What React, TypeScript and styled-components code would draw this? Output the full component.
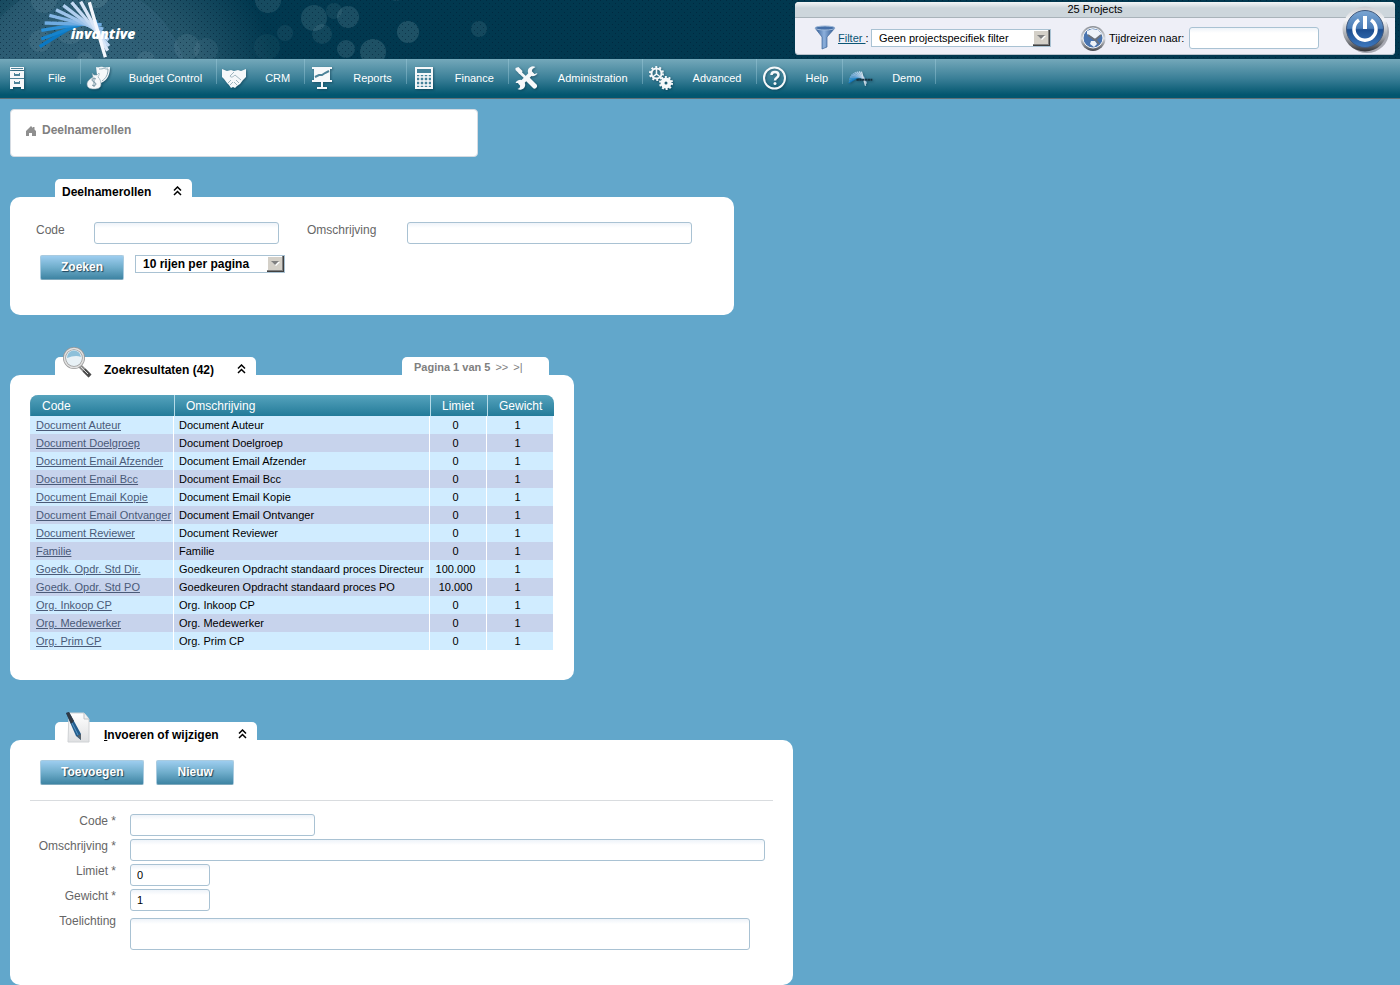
import React from "react";
import styled, { createGlobalStyle, css } from "styled-components";

const GlobalStyle = createGlobalStyle`
  *, *::before, *::after { box-sizing: border-box; }
  body {
    margin: 0;
    background: #62a7cb;
    color: #000;
    font: 11px/16px "Liberation Sans", Arial, sans-serif;
  }
  button, input, select, textarea { font: inherit; color: inherit; margin: 0; }
`;

/* ---------- header ---------- */

const Header = styled.header`
  position: relative;
  display: flex;
  justify-content: space-between;
  align-items: flex-start;
  height: 59px;
  padding: 2px 5px 0 36px;
  overflow: hidden;
  background: #01384f;
`;

const Backdrop = styled.svg`
  position: absolute;
  inset: 0;
  width: 100%;
  height: 100%;
`;

const LogoLink = styled.a`
  position: relative;
  display: block;
  height: 57px;
  svg { display: block; }
`;

const Toolbar = styled.section`
  position: relative;
  width: 600px;
  height: 53px;
  border-radius: 4px;
  overflow: hidden;
  background: #eeeff7;
  box-shadow: inset 0 -1px 0 #b9c2cc;
`;

const ToolbarTitle = styled.div`
  height: 16px;
  line-height: 14px;
  text-align: center;
  border-bottom: 1px solid #a9b3ba;
  background: linear-gradient(#f4f6f7, #cdd6dc 40%, #cdd6dc);
`;

const ToolbarBody = styled.div`
  display: flex;
  align-items: center;
  height: 37px;
  padding: 3px 10px 0 19px;
`;

const FilterText = styled.span`
  width: 35px;
  padding-left: 2px;
  white-space: pre;
  a { color: #0b5575; }
`;

const TravelLabel = styled.label`
  display: flex;
  align-items: center;
  gap: 3px;
  width: 109px;
  margin-left: 29px;
  white-space: nowrap;
`;

const PowerButton = styled.button`
  position: absolute;
  top: 4px;
  right: 5px;
  padding: 0;
  border: 0;
  background: none;
  svg { display: block; }
`;

const Nav = styled.nav`
  display: flex;
  height: 40px;
  border-bottom: 1px solid #5f7077;
  background: linear-gradient(#74a8ba, #3a7f97 50%, #02566f 92%);
`;

const NavItem = styled.a`
  display: flex;
  align-items: center;
  gap: 19px;
  height: 39px;
  padding: 0 15px 2px 5px;
  color: #fff;
  text-decoration: none;
  background: linear-gradient(rgba(160, 205, 220, 0.45), rgba(160, 205, 220, 0.4)) right top / 1px 25px no-repeat;
  svg { filter: drop-shadow(1px 1px 1px rgba(0, 40, 60, 0.45)); }
`;

/* ---------- content ---------- */

const Main = styled.main`
  display: flex;
  flex-direction: column;
  align-items: flex-start;
  padding: 10px 10px 0;
`;

const Breadcrumb = styled.nav`
  display: flex;
  align-items: flex-start;
  gap: 5px;
  width: 468px;
  height: 48px;
  max-width: 100%;
  padding: 12px 14px;
  border: 1px solid #d5dbe2;
  border-radius: 4px;
  background: #fff;
  color: #808080;
  font-size: 12px;
  font-weight: bold;
  svg { margin-top: 3px; }
`;

const Panel = styled.section<{ $first?: boolean }>`
  max-width: 100%;
  margin-top: ${(p) => (p.$first ? 22 : 42)}px;
`;

const TabRow = styled.div`
  display: flex;
  justify-content: space-between;
  height: 18px;
  padding: 0 25px 0 45px;
`;

const Tab = styled.div<{ $width: number }>`
  position: relative;
  display: flex;
  align-items: center;
  justify-content: space-between;
  width: ${(p) => p.$width}px;
  height: 26px;
  padding: 0 10px 0 7px;
  border-radius: 5px 5px 0 0;
  background: linear-gradient(#fff, #fff) top / 100% 18px no-repeat;
`;

const TabTitle = styled.h2`
  display: flex;
  gap: 12px;
  align-items: center;
  margin: 0;
  font-size: 12px;
  line-height: 16px;
  white-space: nowrap;
`;

const TabIcon = styled.span`
  display: block;
  width: 30px;
  height: 16px;
  svg { display: block; margin-top: -16px; }
`;

const CollapseButton = styled.button`
  display: block;
  padding: 0 0 2px;
  border: 0;
  background: none;
  svg { display: block; }
`;

const Pager = styled.div`
  width: 147px;
  height: 18px;
  padding: 2px 12px 0;
  border-radius: 5px 5px 0 0;
  background: #fff;
  color: #808080;
  white-space: nowrap;
  a { margin-left: 5px; color: inherit; text-decoration: none; }
`;

const PanelBody = styled.div<{ $pad: string }>`
  padding: ${(p) => p.$pad};
  border-radius: 10px;
  background: #fff;
`;

const fieldLook = css`
  border: 1px solid #a9c2d3;
  border-radius: 3px;
  background: linear-gradient(#eef3f9, #fff 5px);
`;

const TextInput = styled.input<{ $width: number }>`
  ${fieldLook}
  width: ${(p) => p.$width}px;
  height: 22px;
  padding: 0 6px;
`;

const TextArea = styled.textarea`
  ${fieldLook}
  display: block;
  width: 620px;
  height: 32px;
  margin: 4px 0 3px;
  padding: 4px 6px;
  resize: none;
`;

const SelectFrame = styled.span<{ $width: number }>`
  position: relative;
  display: block;
  width: ${(p) => p.$width}px;
  height: 18px;
  svg { position: absolute; right: 1px; top: 1px; pointer-events: none; }
`;

const Select = styled.select<{ $bold?: boolean }>`
  appearance: none;
  display: block;
  width: 100%;
  height: 18px;
  padding: 0 20px 0 7px;
  border: 1px solid #a9c2d3;
  border-radius: 0;
  background: #fff;
  line-height: 16px;
  ${(p) => p.$bold && css`font-size: 12px; font-weight: bold;`}
`;

const ActionButton = styled.button`
  height: 25px;
  padding: 0 20px 2px;
  border: 1px solid #a9cbe0;
  border-bottom-color: #7fa9bd;
  border-radius: 2px;
  background: linear-gradient(#9dcdef, #6fadcb 50%, #3e84a3);
  color: #fff;
  font-size: 12px;
  font-weight: bold;
  line-height: 20px;
  text-shadow: 1px 1px 1px #1f4358;
`;

const SearchFields = styled.div`
  display: flex;
  align-items: flex-start;
`;

const SearchLabel = styled.label<{ $width: number }>`
  width: ${(p) => p.$width}px;
  color: #666;
  font-size: 12px;
`;

const FieldGap = styled.div`
  display: flex;
  margin-right: 28px;
`;

const SearchActions = styled.div`
  display: flex;
  align-items: flex-start;
  gap: 11px;
  padding: 11px 0 0 4px;
`;

const ResultTable = styled.table`
  width: 524px;
  table-layout: fixed;
  border-spacing: 0;
`;

const HeadCell = styled.th<{ $width: number }>`
  width: ${(p) => p.$width}px;
  height: 21px;
  padding: 0 0 0 11px;
  border-left: 1px solid #b5dbe8;
  background: linear-gradient(#56a3bd, #237b99);
  color: #fff;
  font-size: 12px;
  font-weight: normal;
  line-height: 20px;
  text-align: left;
  &:first-child { border-left-color: #4692ae; border-top-left-radius: 8px; }
  &:last-child { border-top-right-radius: 8px; }
`;

const Row = styled.tr`
  background: #d0ecff;
  &:nth-child(even) { background: #c7d3ec; }
`;

const Cell = styled.td<{ $numeric?: boolean }>`
  height: 18px;
  padding: 0 ${(p) => (p.$numeric ? 10 : 5)}px 0 5px;
  border-right: 1px solid #fff;
  line-height: 18px;
  white-space: nowrap;
  text-align: ${(p) => (p.$numeric ? "center" : "left")};
  &:first-child { padding: 0 0 0 6px; }
  a { color: #4a5a78; white-space: pre; }
`;

const FormActions = styled.div`
  display: flex;
  gap: 12px;
  padding: 0 10px 15px;
  border-bottom: 1px solid #d9dcdf;
`;

const FormGrid = styled.div`
  display: grid;
  grid-template-columns: 86px 1fr;
  column-gap: 14px;
  row-gap: 3px;
  padding: 13px 8px 0 0;
  justify-items: start;
`;

const FormLabel = styled.label`
  justify-self: end;
  color: #666;
  font-size: 12px;
  line-height: 14px;
  white-space: nowrap;
`;

/* ---------- drawings ---------- */

const bubbles: [number, number, number, number][] = [
  [40, 41, 11, 0.1], [44, 0, 13, 0.1], [96, -5, 13, 0.14], [70, 30, 14, 0.1], [85, 60, 8, 0.1], [146, 60, 9, 0.1],
  [187, 47, 13, 0.1], [206, 50, 12, 0.08], [268, 0, 13, 0.13], [285, 33, 8, 0.08],
  [267, 47, 13, 0.05], [314, 18, 13, 0.14], [334, 11, 8, 0.09], [348, 17, 11, 0.15],
  [322, 34, 10, 0.1], [346, 49, 9, 0.15], [373, 52, 13, 0.17], [408, 32, 11, 0.17],
  [479, 29, 8, 0.11], [396, -6, 7, 0.1],
];

const HeaderBackdrop = () => (
  <Backdrop aria-hidden="true">
    <defs>
      <pattern id="dots" width="6" height="6" patternUnits="userSpaceOnUse">
        <rect x="0" y="0" width="1" height="1" fill="#001d33" opacity=".55" />
        <rect x="3" y="3" width="1" height="1" fill="#001d33" opacity=".55" />
      </pattern>
      <radialGradient id="glow" gradientUnits="userSpaceOnUse" cx="95" cy="100" r="185">
        <stop offset="0" stopColor="#2d5e75" />
        <stop offset=".6" stopColor="#235469" />
        <stop offset="1" stopColor="#01384f" />
      </radialGradient>
    </defs>
    <rect width="100%" height="100%" fill="#01384f" />
    <rect width="290" height="59" fill="url(#glow)" />
    <circle cx="80" cy="90" r="108" fill="#6f95b4" opacity=".12" />
    {bubbles.map(([x, y, r, o], i) => (
      <circle key={i} cx={x} cy={y} r={r} fill="#b4d0d6" opacity={o} />
    ))}
    <rect width="100%" height="100%" fill="url(#dots)" />
  </Backdrop>
);

const rays: [number, number, number, number, string][] = [
  [59, 138, 160, 76, "#0a78c4"], [64, 115, 190, 68, "#1583cd"], [64, 89, 232, 62, "#2b8fd6"],
  [74, 67, 245, 72, "#6fabe0"], [88, 44, 250, 85, "#86b7e6"], [108, 27, 258, 101, "#9cc3ea"],
  [130, 14, 266, 118, "#b0ceee"], [155, 5, 267, 136, "#c4daf3"], [182, 3, 263, 150, "#d9e6f7"],
  [208, 5, 256, 170, "#f4f7fd"],
];

const Rays = ({ weight }: { weight: number }) => (
  <g strokeWidth={weight}>
    {rays.map(([x1, y1, x2, y2, c]) => (
      <line key={c} x1={x1} y1={y1} x2={x2} y2={y2} stroke={c} />
    ))}
  </g>
);

const Logo = () => (
  <svg width="104" height="57" viewBox="48 6 312 171" role="img" aria-label="invantive" overflow="visible">
    <g transform="translate(0 2)"><Rays weight={10} /></g>
    <text x="152" y="116" fontFamily="Open Sans, sans-serif" fontWeight="800" fontStyle="italic" fontSize="42" fill="#fff">
      invantive
    </text>
  </svg>
);

const icon = { width: 24, height: 24, viewBox: "0 0 24 24", "aria-hidden": true } as const;
const W = "#f6f8fa";
const D = "#4d8399";

const CabinetIcon = () => (
  <svg {...icon}>
    <path d="M5 1h14v3H5zM5 5h14v7H5zM5 13h14v8H5z" fill={W} />
    <path d="M6 2.500h12M5 12.500h14" stroke={D} />
    <path d="M9 7h6v3H9zM9 15h6v3H9z" fill={D} />
    <path d="M10 7h4v1h-4zM10 15h4v1h-4z" fill={W} />
    <path d="M5 21h3v2H5zM16 21h3v2h-3z" fill={W} />
  </svg>
);

const MoneyIcon = () => (
  <svg {...icon}>
    <path d="M10 1c3 1 5-1 7 0s5 0 7 0c0 7-2 13-9 16l-4-8z" fill={W} />
    <path d="M13 3c2 0 4 0 5-1 1 1 2 1 4 1 0 6-2 9-6 12" fill="none" stroke="#8ea9b5" />
    <path d="M6 7l2 2h3l2-2c1 2-1 3-1 4 2 2 3 4 3 7 0 4-3 5-7 5s-7-1-7-5c0-3 3-5 6-7z" fill={W} stroke="#83a1af" strokeWidth=".6" />
    <path d="M10 13c-2-1-4-1-4 1s4 2 4 4-3 2-4 1M8 11.500v9.500" fill="none" stroke="#7895a3" />
  </svg>
);

const HandshakeIcon = () => (
  <svg {...icon}>
    <path d="M0 3l5 2 4-1 3 1 4-1 3 1 5-2v8l-3 3-3 4-3 2-2 2-2-1-2 1-2-3-2-2-3-4-4-4z" fill={W} />
    <path d="M12 6L8 10c1 2 3 1 5-1l6 5M6 17l3-3M8 19l3-3M14 14l3 3M12 16l3 3" fill="none" stroke="#8aa5b1" strokeWidth=".8" />
  </svg>
);

const BoardIcon = () => (
  <svg {...icon}>
    <path d="M2 1h20v2H2zM2 14h20v2H2zM11 16h2v5h-2zM7 21h10v2H7z" fill={W} />
    <path d="M4 3h16v11H4z" fill={W} />
    <path d="M5 11l4-2 3 0 3-2 4-2" fill="none" stroke={D} strokeWidth="2" />
  </svg>
);

const CalculatorIcon = () => (
  <svg {...icon}>
    <path d="M3 1h18v22H3z" fill={W} />
    <path d="M5 3h14v4H5zM5 9h14v12H5z" fill="#44829a" />
    <path d="M5 11h14M5 15h14M5 19h14M8 9v12M12 9v12M16 9v12" stroke={W} strokeWidth="1.500" />
  </svg>
);

const ToolsIcon = () => (
  <svg {...icon} width={25}>
    <path d="M5 6l14 13" stroke={W} strokeWidth="3" />
    <path d="M13 13l7 7" stroke={W} strokeWidth="5" strokeLinecap="round" />
    <path d="M1 2l3-1 4 4-1 3-2 0-4-4z" fill={W} />
    <path d="M5 19L18 6" stroke={W} strokeWidth="4" />
    <path d="M21 1a5 5 0 1 0 2 6l-3 1-3-2 1-3zM3 23a5 5 0 1 0-2-6l3 0 2 2-1 3z" fill={W} />
  </svg>
);

const GearsIcon = () => (
  <svg {...icon} width={26}>
    <g fill="none" stroke={W}>
      <circle cx="7.500" cy="7.500" r="5" strokeWidth="2" />
      <circle cx="7.500" cy="7.500" r="6.500" strokeWidth="2" strokeDasharray="2 2.080" />
      <path d="M7.500 3v5l-4 3M7.500 8l4 3" strokeWidth="1.500" />
      <circle cx="17" cy="17" r="3.500" strokeWidth="4" />
      <circle cx="17" cy="17" r="6" strokeWidth="2" strokeDasharray="2 1.770" />
    </g>
  </svg>
);

const HelpIcon = () => (
  <svg {...icon} width={25}>
    <circle cx="12" cy="12" r="10.500" fill="none" stroke={W} strokeWidth="2" />
    <path d="M9 9c0-4 7-4 7 0 0 3-3.500 2.500-3.500 5.500" fill="none" stroke={W} strokeWidth="2.500" />
    <circle cx="12.500" cy="17.500" r="1.500" fill={W} />
  </svg>
);

const DemoIcon = () => (
  <svg width="25" height="24" viewBox="52 -60 290 280" aria-hidden="true">
    <path d="M62 100C80 30 140-5 208 5l30 80-80-8-98 62z" fill="#74b4d8" opacity=".55" />
    <g opacity=".8"><Rays weight={15} /></g>
    <path d="M150 100H335" stroke="#15303f" strokeWidth="24" strokeDasharray="28 5" />
  </svg>
);

const FunnelIcon = () => (
  <svg width="22" height="26" viewBox="0 0 22 26" aria-hidden="true">
    <defs>
      <linearGradient id="funnel">
        <stop offset="0" stopColor="#2c5690" /><stop offset=".45" stopColor="#8db0dc" /><stop offset="1" stopColor="#27508a" />
      </linearGradient>
    </defs>
    <path d="M1 3l7 9v12l5-2V12l8-9z" fill="url(#funnel)" stroke="#3c659a" strokeWidth=".7" />
    <ellipse cx="11" cy="3" rx="10" ry="2" fill="#456fa8" stroke="#9db8d8" />
  </svg>
);

const ClockGlobeIcon = () => (
  <svg width="26" height="27" viewBox="0 0 26 27" aria-hidden="true">
    <defs>
      <linearGradient id="rim" x2="0" y2="1">
        <stop offset="0" stopColor="#8b8f96" /><stop offset=".5" stopColor="#d9dce0" /><stop offset="1" stopColor="#44484f" />
      </linearGradient>
    </defs>
    <circle cx="13" cy="13.500" r="12.500" fill="url(#rim)" />
    <circle cx="13" cy="13" r="10" fill="#4a75b0" stroke="#f2f4f7" />
    <path d="M7 6l5-2 6 1 4 4-2 2-5 3-8-5zM11 16l4 0 2 3-3 3-4-3z" fill="#eef3f9" />
    <path d="M8 10l7 5 6-5M15 14l4 5" fill="none" stroke="#6b727b" strokeWidth="1.800" />
  </svg>
);

const PowerIcon = () => (
  <svg width="50" height="48" viewBox="0 0 50 48" aria-hidden="true">
    <defs>
      <linearGradient id="chrome" x2="0" y2="1">
        <stop offset="0" stopColor="#c9ccd1" /><stop offset=".3" stopColor="#f4f5f7" /><stop offset=".7" stopColor="#9a9da3" /><stop offset="1" stopColor="#303338" />
      </linearGradient>
      <linearGradient id="blue" x2="0" y2="1">
        <stop offset="0" stopColor="#7ba6d3" /><stop offset=".48" stopColor="#4b7db8" /><stop offset=".52" stopColor="#1d4e90" /><stop offset="1" stopColor="#3d78bd" />
      </linearGradient>
    </defs>
    <ellipse cx="27" cy="26" rx="22" ry="21" fill="#20262e" opacity=".35" />
    <circle cx="25" cy="23" r="22.500" fill="url(#chrome)" />
    <circle cx="25" cy="23" r="18.500" fill="url(#blue)" stroke="#41597d" />
    <path d="M19 14a11 11 0 1 0 12 0" fill="none" stroke="#fff" strokeWidth="3.500" />
    <path d="M25 10v13" stroke="#fff" strokeWidth="4" />
  </svg>
);

const HomeIcon = () => (
  <svg width="12" height="12" viewBox="0 0 12 12" aria-hidden="true">
    <path d="M6 1L1 6v5h3V8h3v3h4V6L9.500 4.500V2H8v1z" fill="#8f8f8f" />
  </svg>
);

const MagnifierIcon = () => (
  <svg width="30" height="32" viewBox="0 0 30 32" aria-hidden="true">
    <path d="M18 20l10 10" stroke="#8c8c8c" strokeWidth="4" />
    <path d="M22 24l6 6" stroke="#4c4c4c" strokeWidth="4" />
    <path d="M18 20l8 8" stroke="#d8d8d8" strokeWidth="1" />
    <circle cx="12" cy="12" r="9.500" fill="#e8f1f6" stroke="#9a9a9a" strokeWidth="3" />
    <circle cx="12" cy="12" r="9.500" fill="none" stroke="#e2e2e2" strokeWidth="1.500" />
    <path d="M5 12a7 7 0 0 1 14-1c-4-2-9-1-14 1z" fill="#8dc0da" />
  </svg>
);

const PenPageIcon = () => (
  <svg width="30" height="32" viewBox="0 0 30 32" aria-hidden="true">
    <defs>
      <linearGradient id="page" x2="0" y2="1">
        <stop offset="0" stopColor="#fff" /><stop offset="1" stopColor="#dfe0e2" />
      </linearGradient>
    </defs>
    <path d="M7 2h15l5 6v23H6z" fill="url(#page)" stroke="#cfd2d5" />
    <path d="M22 2v6h5" fill="#f1f1f1" stroke="#bfc3c7" />
    <path d="M4 2l3-1 12 22 0 6-5-4z" fill="#235c8c" />
    <path d="M4 2l3-1 5 9-3 3z" fill="#303a45" />
    <path d="M10 12l6 12" stroke="#5b9ac8" />
    <path d="M15 25l4-2 0 6z" fill="#55606a" />
  </svg>
);

const ChevronsUp = () => (
  <svg width="9" height="10" viewBox="0 0 9 10" aria-hidden="true">
    <path d="M1 4.500L4.500 1 8 4.500M1 9l3.500-3.500L8 9" fill="none" stroke="#000" strokeWidth="1.500" />
  </svg>
);

const DropArrow = () => (
  <svg width="17" height="16" viewBox="0 0 17 16" aria-hidden="true">
    <path d="M0 0h17v16H0z" fill="#404040" />
    <path d="M0 0h16v15H0z" fill="#808080" />
    <path d="M0 0h15v14H0z" fill="#fff" />
    <path d="M1 1h14v13H1z" fill="#d4d0c8" />
    <path d="M5 6h8l-4 4z" fill="#fff" />
    <path d="M4 5h8l-4 4z" fill="#808080" />
  </svg>
);

/* ---------- data ---------- */

const menu: [string, React.FC][] = [
  ["File", CabinetIcon],
  ["Budget Control", MoneyIcon],
  ["CRM", HandshakeIcon],
  ["Reports", BoardIcon],
  ["Finance", CalculatorIcon],
  ["Administration", ToolsIcon],
  ["Advanced", GearsIcon],
  ["Help", HelpIcon],
  ["Demo", DemoIcon],
];

const roles: [string, string, string][] = [
  ["Document Auteur", "Document Auteur", "0"],
  ["Document Doelgroep", "Document Doelgroep", "0"],
  ["Document Email Afzender", "Document Email Afzender", "0"],
  ["Document Email Bcc", "Document Email Bcc", "0"],
  ["Document Email Kopie", "Document Email Kopie", "0"],
  ["Document Email Ontvanger", "Document Email Ontvanger", "0"],
  ["Document Reviewer", "Document Reviewer", "0"],
  ["Familie", "Familie", "0"],
  ["Goedk. Opdr. Std Dir.", "Goedkeuren Opdracht standaard proces Directeur", "100.000"],
  ["Goedk. Opdr. Std PO", "Goedkeuren Opdracht standaard proces PO", "10.000"],
  ["Org. Inkoop CP", "Org. Inkoop CP", "0"],
  ["Org. Medewerker", "Org. Medewerker", "0"],
  ["Org. Prim CP", "Org. Prim CP", "0"],
];

const PanelTab = ({ width, icon, children }: { width: number; icon?: React.ReactNode; children: React.ReactNode }) => (
  <Tab $width={width}>
    <TabTitle>
      {icon && <TabIcon>{icon}</TabIcon>}
      <span>{children}</span>
    </TabTitle>
    <CollapseButton type="button" aria-label="Inklappen"><ChevronsUp /></CollapseButton>
  </Tab>
);

export default function App() {
  return (
    <>
      <GlobalStyle />
      <Header>
        <HeaderBackdrop />
        <LogoLink href="#"><Logo /></LogoLink>
        <Toolbar>
          <ToolbarTitle>25 Projects</ToolbarTitle>
          <ToolbarBody>
            <FunnelIcon />
            <FilterText><a href="#">Filter </a>:</FilterText>
            <SelectFrame $width={180}>
              <Select aria-label="Filter"><option>Geen projectspecifiek filter</option></Select>
              <DropArrow />
            </SelectFrame>
            <TravelLabel htmlFor="travel"><ClockGlobeIcon />Tijdreizen naar:</TravelLabel>
            <TextInput id="travel" $width={130} />
          </ToolbarBody>
          <PowerButton type="button" aria-label="Afmelden"><PowerIcon /></PowerButton>
        </Toolbar>
      </Header>
      <Nav>
        {menu.map(([label, Icon]) => (
          <NavItem href="#" key={label}><Icon />{label}</NavItem>
        ))}
      </Nav>
      <Main>
        <Breadcrumb><HomeIcon />Deelnamerollen</Breadcrumb>

        <Panel $first>
          <TabRow><PanelTab width={137}>Deelnamerollen</PanelTab></TabRow>
          <PanelBody $pad="25px 14px 35px 26px">
            <SearchFields>
              <FieldGap>
                <SearchLabel htmlFor="s-code" $width={58}>Code</SearchLabel>
                <TextInput id="s-code" $width={185} />
              </FieldGap>
              <FieldGap>
                <SearchLabel htmlFor="s-desc" $width={100}>Omschrijving</SearchLabel>
                <TextInput id="s-desc" $width={285} />
              </FieldGap>
            </SearchFields>
            <SearchActions>
              <ActionButton type="button">Zoeken</ActionButton>
              <SelectFrame $width={150}>
                <Select $bold aria-label="Rijen per pagina"><option>10 rijen per pagina</option></Select>
                <DropArrow />
              </SelectFrame>
            </SearchActions>
          </PanelBody>
        </Panel>

        <Panel>
          <TabRow>
            <PanelTab width={201} icon={<MagnifierIcon />}>Zoekresultaten (42)</PanelTab>
            <Pager><b>Pagina 1 van 5</b><a href="#">&gt;&gt;</a><a href="#">&gt;|</a></Pager>
          </TabRow>
          <PanelBody $pad="20px 20px 30px">
            <ResultTable>
              <thead>
                <tr>
                  <HeadCell $width={144}>Code</HeadCell>
                  <HeadCell $width={256}>Omschrijving</HeadCell>
                  <HeadCell $width={57}>Limiet</HeadCell>
                  <HeadCell $width={67}>Gewicht</HeadCell>
                </tr>
              </thead>
              <tbody>
                {roles.map(([code, description, limit]) => (
                  <Row key={code}>
                    <Cell><a href="#">{code}</a></Cell>
                    <Cell>{description}</Cell>
                    <Cell $numeric>{limit}</Cell>
                    <Cell $numeric>1</Cell>
                  </Row>
                ))}
              </tbody>
            </ResultTable>
          </PanelBody>
        </Panel>

        <Panel>
          <TabRow>
            <PanelTab width={202} icon={<PenPageIcon />}><u>I</u>nvoeren of wijzigen</PanelTab>
          </TabRow>
          <PanelBody $pad="20px 20px 32px">
            <FormActions>
              <ActionButton type="button">Toevoegen</ActionButton>
              <ActionButton type="button">Nieuw</ActionButton>
            </FormActions>
            <FormGrid>
              <FormLabel htmlFor="f-code">Code *</FormLabel>
              <TextInput id="f-code" $width={185} />
              <FormLabel htmlFor="f-desc">Omschrijving *</FormLabel>
              <TextInput id="f-desc" $width={635} />
              <FormLabel htmlFor="f-limit">Limiet *</FormLabel>
              <TextInput id="f-limit" $width={80} defaultValue="0" />
              <FormLabel htmlFor="f-weight">Gewicht *</FormLabel>
              <TextInput id="f-weight" $width={80} defaultValue="1" />
              <FormLabel htmlFor="f-note">Toelichting</FormLabel>
              <TextArea id="f-note" />
            </FormGrid>
          </PanelBody>
        </Panel>
      </Main>
    </>
  );
}
